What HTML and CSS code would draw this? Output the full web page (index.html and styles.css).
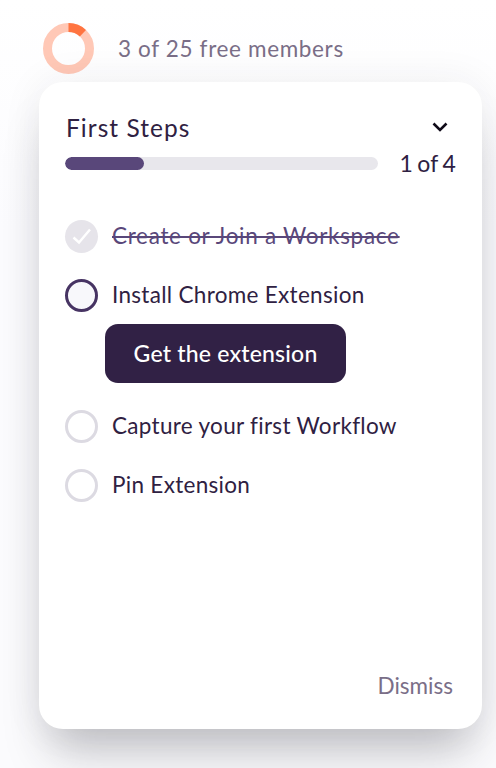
FILE: index.html
```html
<!DOCTYPE html>
<html lang="en">
<head>
<meta charset="utf-8">
<title>First Steps</title>
<link rel="stylesheet" href="styles.css">
</head>
<body>
<main class="page">
  <header class="members">
    <svg class="ring" viewBox="0 0 51 51" width="51" height="51" aria-hidden="true">
      <circle cx="25.5" cy="25.5" r="21" fill="none" stroke="#ffc8b6" stroke-width="9"/>
      <path d="M25.5 4.5A21 21 0 0 1 39.9 10.2" fill="none" stroke="#ff7440" stroke-width="9"/>
    </svg>
    <span class="members-text">3 of 25 free members</span>
  </header>
  <section class="card">
    <div class="title-row">
      <h1 class="title">First Steps</h1>
      <svg class="chevron" viewBox="0 0 16 10" width="16" height="10" aria-hidden="true">
        <path d="M1.5 1.5L8 8l6.5-6.5" fill="none" stroke="#0f0a18" stroke-width="2.6"/>
      </svg>
    </div>
    <div class="progress-row">
      <div class="track"><div class="fill" style="width:25.2%"></div></div>
      <span class="count">1 of 4</span>
    </div>
    <ul class="steps">
      <li class="step">
        <span class="mark done">
          <svg viewBox="0 0 33 33" width="33" height="33" aria-hidden="true">
            <path d="M8.5 17.5l5.5 5 11-13" fill="none" stroke="#fff" stroke-width="2.4"/>
          </svg>
        </span>
        <span class="label struck">Create or Join a Workspace</span>
      </li>
      <li class="step">
        <span class="mark current"></span>
        <span class="label">Install Chrome Extension</span>
      </li>
      <li class="action"><button class="cta" type="button">Get the extension</button></li>
      <li class="step">
        <span class="mark"></span>
        <span class="label">Capture your first Workflow</span>
      </li>
      <li class="step">
        <span class="mark"></span>
        <span class="label">Pin Extension</span>
      </li>
    </ul>
    <div class="footer"><span class="dismiss">Dismiss</span></div>
  </section>
</main>
</body>
</html>
```
FILE: styles.css
```css
* { box-sizing: border-box; }
html, body { margin: 0; height: 100%; }
body {
  background: #fff;
  overflow: hidden;
  font-family: "Lato", "Liberation Sans", sans-serif;
  color: #2f2142;
}
.page {
  height: 768px;
  padding: 23px 14px 0 39px;
  display: flex;
  flex-direction: column;
  background: linear-gradient(#ffffff, #fbfbfe 30%, #fbfbfd);
}
.members {
  display: flex;
  align-items: center;
  gap: 24px;
  padding-left: 4px;
  height: 51px;
}
.ring { flex: none; }
.members-text {
  font-size: 22.5px;
  letter-spacing: 0.65px;
  color: #7a6e87;
}
.card {
  margin-top: 8px;
  height: 647px;
  background: #fff;
  border-radius: 24px;
  padding: 27px 26px 0 26px;
  display: flex;
  flex-direction: column;
  box-shadow: 0 34px 46px -12px rgba(40, 40, 50, 0.27), 0 0 40px rgba(40, 40, 60, 0.07);
}
.title-row {
  display: flex;
  justify-content: space-between;
  align-items: center;
  height: 36px;
}
.title {
  margin: 0 0 0 1px;
  font-size: 24.5px;
  font-weight: 400;
  letter-spacing: 1.05px;
}
.chevron { margin-right: 8px; }
.progress-row {
  display: flex;
  align-items: center;
  justify-content: space-between;
  margin-top: 11px;
  height: 15px;
}
.track {
  width: 313px;
  height: 13px;
  border-radius: 7px;
  background: #e8e7ec;
  overflow: hidden;
}
.fill { height: 100%; border-radius: 7px; background: #59477a; }
.count {
  font-size: 23px;
  letter-spacing: 0.2px;
  word-spacing: -1.8px;
  position: relative;
  top: -1px;
}
.steps {
  list-style: none;
  margin: 49px 0 0;
  padding: 0;
  display: flex;
  flex-direction: column;
}
.step {
  display: flex;
  align-items: center;
  gap: 14px;
  height: 33px;
  margin-bottom: 26px;
}
.mark {
  flex: none;
  width: 33px;
  height: 33px;
  border-radius: 50%;
  border: 3px solid #dcdae2;
}
.mark.done { border: 0; background: #e6e4ea; display: block; }
.mark.done svg { display: block; }
.mark.current { border-color: #473463; background: #f8f8fb; }
.label {
  font-size: 22.5px;
  line-height: 30px;
  letter-spacing: 0.3px;
  white-space: nowrap;
  margin-top: -2px;
}
.struck { color: #59477a; text-decoration: line-through; letter-spacing: 0.7px; }
.action { margin: -14px 0 27px 40px; }
.cta {
  display: block;
  width: 241px;
  height: 59px;
  padding: 0 0 2px;
  border: 0;
  border-radius: 13px;
  background: #312145;
  color: #fff;
  font: 500 23px "Lato", "Liberation Sans", sans-serif;
  letter-spacing: 0.2px;
}
.footer {
  margin-top: auto;
  display: flex;
  justify-content: flex-end;
  padding-right: 3px;
  height: 57px;
}
.dismiss { font-size: 22.5px; letter-spacing: 0; color: #7a6e87; }
```
